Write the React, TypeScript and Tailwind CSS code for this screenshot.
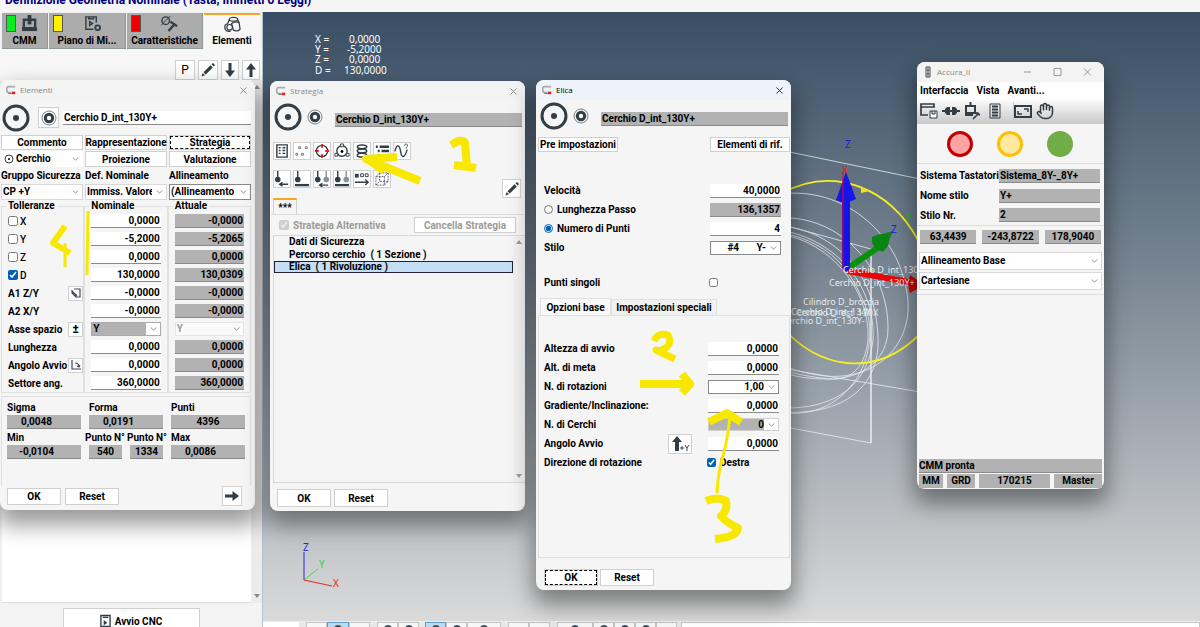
import type { ReactNode } from 'react'
import clsx from 'clsx'
import { Hand, X } from 'lucide-react'

const button = 'flex items-center justify-center border border-[#d0d0d0] bg-white whitespace-nowrap'
const focused = 'border-[#666] outline-1 outline-dashed -outline-offset-2 outline-black'

function Field({ value, label, grey, className }: { value: string; label: string; grey?: boolean; className?: string }) {
  return (
    <input
      aria-label={label}
      defaultValue={value}
      readOnly={grey}
      className={clsx(
        'block h-[14px] min-w-0 border-b border-[#8a8a8a] px-px leading-3 outline-none',
        grey ? 'bg-[#b2b2b2]' : 'bg-white',
        className
      )}
    />
  )
}

function Select({ value, label, className, box }: { value: string; label: string; className?: string; box?: string }) {
  return (
    <div className={clsx('relative', box)}>
      <select
        aria-label={label}
        className={clsx('block h-full w-full appearance-none border pr-[14px] pl-px leading-3', className ?? 'border-[#d9d9d9] bg-white')}
      >
        <option>{value}</option>
      </select>
      <svg viewBox="0 0 8 5" className="pointer-events-none absolute top-1/2 right-1 h-[4px] w-[7px] -translate-y-1/2">
        <path d="M.5.5 4 4 7.5.5" fill="none" stroke="#777" />
      </svg>
    </div>
  )
}

function AppIcon() {
  return (
    <svg viewBox="0 0 12 12" className="h-[10px] w-[10px]">
      <path d="M11 2H3Q1 2 1 4v3q0 2 2 2h3" fill="none" stroke="#aaa" strokeWidth="2" />
      <path d="M3 10h4" stroke="#444" />
      <path d="M7 8h4v3H7z" fill="#e02020" />
    </svg>
  )
}

function TitleBar({ title, active }: { title: string; active?: boolean }) {
  return (
    <div className={clsx('flex h-5 items-center justify-between rounded-t-lg px-[6px]', active ? 'bg-[#edf3f9]' : 'bg-[#f3f3f3]')}>
      <div className={clsx("flex items-center gap-1 font-['Open_Sans',sans-serif] text-[8px] font-normal", active ? 'text-black' : 'text-[#888]')}>
        <AppIcon />
        {title}
      </div>
      <button aria-label="Chiudi">
        <X className={clsx('size-[11px]', active ? 'text-[#222]' : 'text-[#888]')} />
      </button>
    </div>
  )
}

function CircleIcon() {
  return (
    <svg viewBox="0 0 28 28" className="size-7 shrink-0">
      <circle cx="14" cy="14" r="12" fill="none" stroke="#333d45" strokeWidth="3" />
      <circle cx="14" cy="14" r="3" fill="#333d45" />
    </svg>
  )
}

function RingIcon() {
  return (
    <svg viewBox="0 0 16 16" className="size-4 shrink-0">
      <circle cx="8" cy="8" r="7" fill="none" stroke="#77808a" />
      <circle cx="8" cy="8" r="3.7" fill="none" stroke="#333d45" strokeWidth="3" />
    </svg>
  )
}

function PencilIcon() {
  return (
    <svg viewBox="0 0 16 16" className="size-4">
      <path d="m1.500 14.500 1.200-3.500 2.300 2.300zM3.500 10.200 10.500 3.200l2.300 2.300-7 7z" fill="#333d45" />
      <path d="m11.500 2.300 1.500-1.300 2 2-1.300 1.500z" fill="#333d45" />
    </svg>
  )
}

function SolidArrow({ turn }: { turn?: string }) {
  return (
    <svg viewBox="0 0 16 16" className={clsx('size-4 shrink-0', turn)}>
      <path d="M8 1 3 7.500h3.500V15h3V7.500H13z" fill="#333d45" />
    </svg>
  )
}

const modules = [
  { name: 'CMM', light: 'bg-[#00f020]', width: 'w-[46px]' },
  { name: 'Piano di Mi...', light: 'bg-[#fff000]', width: 'w-[77px]' },
  { name: 'Caratteristiche', light: 'bg-[#f00000]', width: 'w-[76px]' },
]

const moduleIcons: Record<string, ReactNode> = {
  CMM: (
    <>
      <path d="M4 5h12v9H4z" fill="none" stroke="#333d45" strokeWidth="2.500" />
      <path d="M10 0v10" stroke="#333d45" strokeWidth="4" />
      <path d="M2 13h16v4H2z" fill="#333d45" />
    </>
  ),
  'Piano di Mi...': (
    <>
      <path d="M14 8V2H3v13h8M6 2v2h5V2M7 7l3 2-3 2z" fill="none" stroke="#333d45" strokeWidth="1.500" />
      <circle cx="15.500" cy="13.500" r="2.500" fill="none" stroke="#333d45" strokeWidth="2" />
    </>
  ),
  Caratteristiche: (
    <>
      <circle cx="6" cy="6" r="4" fill="none" stroke="#333d45" strokeWidth="1.500" />
      <path d="M1 11 11 1" stroke="#333d45" />
      <path d="m9 17 6-7M11 7l7 5" fill="none" stroke="#333d45" strokeWidth="2.500" />
    </>
  ),
  Elementi: (
    <g fill="none" stroke="#333d45" strokeWidth="1.300">
      <ellipse cx="11" cy="3.500" rx="4.500" ry="2" />
      <path d="M6.500 4 5 8M15.500 4l2 4M5 8q-4 1-3 5t6 3M9 8l2 7q4 2 7-1l-1-7q-4-2-8 1z" />
      <circle cx="7" cy="12" r="3" />
    </g>
  ),
}

function ModuleIcon({ name }: { name: string }) {
  return <svg viewBox="0 0 20 18" className="h-[17px] w-[19px]">{moduleIcons[name]}</svg>
}

function Sidebar() {
  return (
    <aside className="flex w-[263px] shrink-0 flex-col border-r border-[#b8c0c8] bg-[#f0f0f0]">
      <nav className="flex gap-px pt-px pl-[2px]">
        {modules.map(m => (
          <button key={m.name} className={clsx('h-9 border-r border-b border-[#8f9a98] bg-[#acacac] px-1', m.width)}>
            <span className="flex h-5 items-center">
              <span className={clsx('h-[17px] w-[10px] border border-[#555]', m.light)} />
              <span className="flex flex-1 justify-center"><ModuleIcon name={m.name} /></span>
            </span>
            <span className="block leading-[14px] whitespace-nowrap">{m.name}</span>
          </button>
        ))}
        <button className="mr-[2px] flex h-9 flex-1 flex-col items-center border-t-2 border-[#f5a623] bg-[#f7f7f7]">
          <span className="flex h-[19px] items-center"><ModuleIcon name="Elementi" /></span>
          <span className="block leading-[14px]">Elementi</span>
        </button>
      </nav>
      <div className="flex h-[31px] items-end justify-end gap-[3px] bg-[#f7f7f7] pr-[2px]">
        <button className={clsx(button, 'size-5 text-[12px] font-normal')}>P</button>
        <button aria-label="Modifica" className={clsx(button, 'size-5')}><PencilIcon /></button>
        <button aria-label="Giù" className={clsx(button, 'h-5 w-[18px]')}><SolidArrow turn="rotate-180" /></button>
        <button aria-label="Su" className={clsx(button, 'h-5 w-[18px]')}><SolidArrow /></button>
      </div>
      <div className="flex flex-1">
        <div className="ml-[2px] flex-1 border-b border-[#dedede] bg-white" />
        <div className="flex w-[11px] flex-col items-center justify-between bg-[#ececec] py-[5px]">
          <span className="border-x-3 border-b-4 border-x-transparent border-b-[#888]" />
          <span className="border-x-3 border-t-4 border-x-transparent border-t-[#888]" />
        </div>
      </div>
      <div className="flex h-6 items-start justify-center bg-[#f3f3f3] pt-[5px]">
        <button className={clsx(button, 'h-[26px] w-[137px] shrink-0 gap-1')}>
          <svg viewBox="0 0 12 14" className="h-[14px] w-[11px]">
            <path d="M1 1h10v12H1zM3 3h6" fill="none" stroke="#333d45" strokeWidth="1.500" />
            <path d="m4 6 4 3-4 3z" fill="#333d45" />
          </svg>
          Avvio CNC
        </button>
      </div>
    </aside>
  )
}

function Window({ className, children }: { className: string; children: ReactNode }) {
  return (
    <section className={clsx('absolute flex flex-col rounded-lg bg-[#f5f5f5] shadow-[0_12px_22px_3px_rgba(0,0,0,0.4)]', className)}>
      {children}
    </section>
  )
}

const tolerances = [
  { label: 'X', check: true, nominal: '0,0000', actual: '-0,0000' },
  { label: 'Y', check: true, nominal: '-5,2000', actual: '-5,2065' },
  { label: 'Z', check: true, nominal: '0,0000', actual: '0,0000' },
  { label: 'D', check: true, on: true, nominal: '130,0000', actual: '130,0309' },
  { label: 'A1 Z/Y', icon: 'plane', nominal: '-0,0000', actual: '-0,0000' },
  { label: 'A2 X/Y', nominal: '-0,0000', actual: '-0,0000' },
  { label: 'Asse spazio', icon: 'sign', axis: true, nominal: 'Y', actual: 'Y' },
  { label: 'Lunghezza', nominal: '0,0000', actual: '0,0000' },
  { label: 'Angolo Avvio', icon: 'angle', nominal: '0,0000', actual: '0,0000' },
  { label: 'Settore ang.', nominal: '360,0000', actual: '360,0000' },
]

function RowIcon({ kind }: { kind: string }) {
  return (
    <button aria-label={kind} className={clsx(button, 'size-[15px] text-[12px]')}>
      {kind === 'sign' && '±'}
      {kind === 'plane' && (
        <svg viewBox="0 0 12 12" className="size-3"><path d="M4 2h6v8H7M2 3v3l4 4V7M2 4l5 5" fill="none" stroke="#445" strokeWidth="1.200" /></svg>
      )}
      {kind === 'angle' && (
        <svg viewBox="0 0 12 12" className="size-3"><path d="M2 1v9h9M5 4q4 0 4 4M7 7l2 1 1-2" fill="none" stroke="#445" strokeWidth="1.200" /></svg>
      )}
    </button>
  )
}

const group = 'min-w-0 border border-[#e0e0e0]'
const legend = 'ml-1 px-[2px] leading-3'
const row = 'flex h-[18px] items-center'

function ElementWindow() {
  return (
    <Window className="top-20 left-0 w-[255px] pb-1">
      <TitleBar title="Elementi" />
      <div className="flex h-[35px] items-center gap-2 pr-1 pl-[2px]">
        <CircleIcon />
        <button aria-label="Tipo" className={clsx(button, 'size-[21px] shrink-0')}><RingIcon /></button>
        <Field label="Nome" value="Cerchio D_int_130Y+" className="-ml-1 flex-1" />
      </div>
      <div className="grid grid-cols-3 gap-x-[2px] pr-1 pl-px">
        <button className={clsx(button, 'h-[15px]')}>Commento</button>
        <button className={clsx(button, 'h-[15px]')}>Rappresentazione</button>
        <button className={clsx(button, focused, 'h-[15px]')}>Strategia</button>
        <div className="mt-px flex h-4 items-center bg-white pl-[3px]">
          <svg viewBox="0 0 10 10" className="size-[10px] shrink-0">
            <circle cx="5" cy="5" r="4" fill="none" stroke="#333d45" />
            <circle cx="5" cy="5" r="1" />
          </svg>
          <Select label="Elemento" value="Cerchio" className="border-transparent" box="h-4 flex-1" />
        </div>
        <button className={clsx(button, 'mt-px h-4')}>Proiezione</button>
        <button className={clsx(button, 'mt-px h-4')}>Valutazione</button>
        <span className="flex h-[17px] items-center whitespace-nowrap">Gruppo Sicurezza</span>
        <span className="flex h-[17px] items-center">Def. Nominale</span>
        <span className="flex h-[17px] items-center">Allineamento</span>
        <Select label="Gruppo Sicurezza" value="CP +Y" box="h-4" />
        <Select label="Def. Nominale" value="Immiss. Valore" box="h-4" />
        <Select label="Allineamento" value="(Allineamento Base)" className="border-[#888] bg-white" box="h-4" />
      </div>

      <div className="grid grid-cols-3 pr-1 pl-px">
        <fieldset className={group}>
          <legend className={legend}>Tolleranze</legend>
          {tolerances.map(t => (
            <div key={t.label} className={clsx(row, 'justify-between pl-[6px]')}>
              {t.check ? (
                <label className="flex items-center gap-[2px] font-medium">
                  <input type="checkbox" defaultChecked={t.on} className="size-[10px] accent-[#005fb8]" />
                  {t.label}
                </label>
              ) : (
                <span className="whitespace-nowrap">{t.label}</span>
              )}
              {t.icon && <RowIcon kind={t.icon} />}
            </div>
          ))}
        </fieldset>
        <fieldset className={group}>
          <legend className={legend}>Nominale</legend>
          {tolerances.map(t => (
            <div key={t.label} className={clsx(row, 'px-[6px]')}>
              {t.axis ? (
                <Select label={t.label} value={t.nominal} className="border-[#aaa] bg-linear-to-r from-[#b2b2b2] from-80% to-white to-80%" box="h-[14px] w-full" />
              ) : (
                <Field label={t.label} value={t.nominal} className="w-full text-right" />
              )}
            </div>
          ))}
        </fieldset>
        <fieldset className={group}>
          <legend className={legend}>Attuale</legend>
          {tolerances.map(t => (
            <div key={t.label} className={clsx(row, 'px-[6px]')}>
              {t.axis ? (
                <Select label={t.label} value={t.actual} className="border-[#e5e5e5] bg-[#fafafa] text-[#999]" box="h-[14px] w-full" />
              ) : (
                <Field label={t.label} value={t.actual} grey className="w-full text-right" />
              )}
            </div>
          ))}
        </fieldset>
      </div>

      <div className="mt-[3px] mr-1 ml-px h-[90px] border border-b-0 border-[#e0e0e0] px-[5px] pt-1">
        <div className="grid grid-cols-3 gap-x-2">
          <span className="leading-[14px]">Sigma</span>
          <span className="leading-[14px]">Forma</span>
          <span className="leading-[14px]">Punti</span>
          <Field label="Sigma" value="0,0048" grey className="w-full pr-4 text-center" />
          <Field label="Forma" value="0,0191" grey className="w-full pr-4 text-center" />
          <Field label="Punti" value="4396" grey className="w-full text-center" />
        </div>
        <div className="mt-[2px] grid grid-cols-3 gap-x-2">
          <span className="leading-[14px]">Min</span>
          <span className="-ml-1 flex justify-between leading-[14px] whitespace-nowrap"><span>Punto N°</span><span className="-mr-1">Punto N°</span></span>
          <span className="leading-[14px]">Max</span>
          <Field label="Min" value="-0,0104" grey className="w-full pr-4 text-center" />
          <div className="flex gap-2">
            <Field label="Punto min" value="540" grey className="w-full text-center" />
            <Field label="Punto max" value="1334" grey className="w-full text-center" />
          </div>
          <Field label="Max" value="0,0086" grey className="w-full pr-4 text-center" />
        </div>
      </div>
      <div className="flex items-center gap-1 pr-[13px] pl-[7px]">
        <button className={clsx(button, 'h-[17px] w-[54px]')}>OK</button>
        <button className={clsx(button, 'h-[17px] w-[54px]')}>Reset</button>
        <button aria-label="Avanti" className={clsx(button, 'ml-auto size-5')}><SolidArrow turn="rotate-90" /></button>
      </div>
    </Window>
  )
}

const strategyIcons: ReactNode[] = [
  <><path d="M3 2h11v13H3z" fill="none" stroke="#333d45" strokeWidth="1.500" /><path d="M5 5h2m2 0h3M5 8h2m2 0h3M5 11h2m2 0h3" stroke="#333d45" strokeWidth="1.500" /></>,
  <path d="M2 11h2v2H2zM8 11h2v2H8zM5 4h2v2H5zM12 4h2v2h-2z" fill="none" stroke="#777" />,
  <><circle cx="8.500" cy="8.500" r="6" fill="none" stroke="#333d45" strokeWidth="1.500" /><path d="M8.500 1v4m0 7v4M1 8.500h4m7 0h4" stroke="#f01818" strokeWidth="2" /></>,
  <><circle cx="8.500" cy="8.500" r="5.500" fill="none" stroke="#333d45" strokeWidth="1.500" /><circle cx="8.500" cy="9" r="1.500" /><path d="M7 1h3v3H7zM1 11h3v3H1zM13 11h3v3h-3z" fill="#fff" stroke="#333d45" /></>,
  <g fill="none" stroke="#333d45" strokeWidth="1.600"><ellipse cx="8.500" cy="4" rx="5" ry="2" /><ellipse cx="8.500" cy="8.500" rx="5" ry="2" /><ellipse cx="8.500" cy="13" rx="5" ry="2" /></g>,
  <path d="M2 4h2m2 0h10M4 8.500h2m2 0h8M4 13h2m2 0h8" stroke="#333d45" strokeWidth="2.500" />,
  <><path d="M1 9c2-9 5-7 6 0s4 8 7-2" fill="none" stroke="#333d45" strokeWidth="1.500" /><path d="M11 3q0-2 2-2t1 3l-1 1v1" fill="none" stroke="#556" /></>,
]

const probe = <><path d="M4 0v10" stroke="#333d45" strokeWidth="1.500" /><circle cx="4" cy="9" r="3" fill="#333d45" /></>
const probeFaded = <><path d="M13 0v10" stroke="#88929a" strokeWidth="1.500" /><circle cx="13" cy="9" r="3" fill="#88929a" /></>

const travelIcons: ReactNode[] = [
  <>{probe}<path d="M15 14H6m3-2-3 2 3 2" fill="none" stroke="#333d45" strokeWidth="1.500" /></>,
  <>{probe}<path d="M1 15h15" stroke="#333d45" strokeWidth="2.500" /></>,
  <>{probe}{probeFaded}<path d="M15 15H6m3-2-3 2 3 2" fill="none" stroke="#333d45" strokeWidth="1.500" /></>,
  <>{probe}{probeFaded}<path d="M1 15h15" stroke="#333d45" strokeWidth="2.500" /></>,
  <><path d="M1 3h4v4H1z" fill="#333d45" /><path d="M7 3h3v3H7zM12 3h3v3h-3z" fill="none" stroke="#333d45" /><path d="M1 12h14m-3-3 3 3-3 3" fill="none" stroke="#333d45" strokeWidth="1.500" /></>,
  <path d="M2 6h9v9H2zM6 2h9v9h-4M2 6l4-4v9M11 6l4-4M2 15l4-4h5M11 15l4-4" fill="none" stroke="#556" strokeDasharray="2 1" />,
]

function IconRow({ icons }: { icons: ReactNode[] }) {
  return (
    <div className="flex gap-[2px]">
      {icons.map((icon, i) => (
        <button key={i} aria-label={`Strumento ${i + 1}`} className={clsx(button, 'size-[18px]')}>
          <svg viewBox="0 0 17 17" className="size-4 shrink-0">{icon}</svg>
        </button>
      ))}
    </div>
  )
}

function NameRow() {
  return (
    <div className="flex h-8 items-center pr-[3px] pl-1">
      <CircleIcon />
      <span className="ml-[5px]"><RingIcon /></span>
      <Field label="Nome elemento" value="Cerchio D_int_130Y+" grey className="mt-[6px] ml-3 flex-1" />
    </div>
  )
}

function StrategyWindow() {
  return (
    <Window className="top-[81px] left-[270px] w-[255px] pb-1">
      <TitleBar title="Strategia" />
      <NameRow />
      <div className="flex flex-col gap-[10px] pt-[9px] pl-[3px]">
        <IconRow icons={strategyIcons} />
        <IconRow icons={travelIcons} />
      </div>
      <div className="-mt-[9px] flex items-end justify-between pr-1 pl-[3px]">
        <button className="h-4 w-6 border border-t-2 border-b-0 border-[#d0d0d0] border-t-[#f5a623]">***</button>
        <button aria-label="Modifica" className={clsx(button, 'mb-4 size-[19px]')}><PencilIcon /></button>
      </div>
      <div className="mx-px flex h-[21px] items-center justify-between border-t border-[#ddd] px-2 text-[#9a9a9a]">
        <label className="flex items-center gap-1">
          <input type="checkbox" defaultChecked disabled className="size-[10px]" />
          Strategia Alternativa
        </label>
        <button className={clsx(button, 'h-4 w-[102px]')}>Cancella Strategia</button>
      </div>
      <div className="ml-[3px] flex h-[248px] border border-r-0 border-[#d8d8d8]">
        <ul className="flex-1">
          <li className="pl-[15px] leading-3">Dati di Sicurezza</li>
          <li className="pl-[15px] leading-[13px] whitespace-pre">Percorso cerchio  ( 1 Sezione )</li>
          <li className="border border-[#223] bg-[#c3def5] pl-[14px] leading-[10px] whitespace-pre">Elica  ( 1 Rivoluzione )</li>
        </ul>
        <div className="flex w-3 flex-col items-center justify-between bg-[#f0f0f0] py-1">
          <span className="border-x-3 border-b-4 border-x-transparent border-b-[#999]" />
          <span className="border-x-3 border-t-4 border-x-transparent border-t-[#999]" />
        </div>
      </div>
      <div className="mt-[6px] flex gap-[3px] pl-[7px]">
        <button className={clsx(button, 'h-[18px] w-[54px]')}>OK</button>
        <button className={clsx(button, 'h-[18px] w-[54px]')}>Reset</button>
      </div>
    </Window>
  )
}

function FormRow({ label, children }: { label: ReactNode; children: ReactNode }) {
  return (
    <div className="flex h-[19px] items-center justify-between">
      {label}
      {children}
    </div>
  )
}

function HelixWindow() {
  return (
    <Window className="top-20 left-[536px] w-[255px] pb-1">
      <TitleBar title="Elica" active />
      <NameRow />
      <div className="mt-[5px] flex justify-between pr-px pl-[2px]">
        <button className={clsx(button, 'h-[15px] w-20')}>Pre impostazioni</button>
        <button className={clsx(button, 'h-[15px] w-20')}>Elementi di rif.</button>
      </div>
      <div className="mt-[29px] pr-[10px] pl-2">
        <FormRow label="Velocità"><Field label="Velocità" value="40,0000" className="w-[71px] text-right" /></FormRow>
        <FormRow label={<label className="flex items-center gap-1"><input type="radio" name="passo" className="size-[9px]" />Lunghezza Passo</label>}>
          <Field label="Lunghezza" value="136,1357" grey className="w-[71px] text-right" />
        </FormRow>
        <FormRow label={<label className="flex items-center gap-1"><input type="radio" name="passo" defaultChecked className="size-[9px] accent-[#005fb8]" />Numero di Punti</label>}>
          <Field label="Punti" value="4" className="w-[71px] text-right" />
        </FormRow>
        <FormRow label="Stilo">
          <Select label="Stilo" value={'#4\u00a0\u00a0\u00a0\u00a0\u00a0\u00a0\u00a0Y-'} className="border-[#888] bg-white text-right [text-align-last:right]" box="h-[14px] w-[71px]" />
        </FormRow>
      </div>
      <label className="mt-4 flex h-[19px] items-center justify-between pr-[73px] pl-2">
        Punti singoli
        <input type="checkbox" className="size-[9px]" />
      </label>
      <div className="mt-[6px] flex items-end pl-1" role="tablist">
        <button role="tab" aria-selected className="h-[17px] w-[71px] border border-b-0 border-[#e0e0e0] bg-[#f9f9f9]">Opzioni base</button>
        <button role="tab" aria-selected={false} className="h-4 w-[106px] border border-b-0 border-[#e0e0e0] bg-[#f1f1f1]">Impostazioni speciali</button>
      </div>
      <div className="mr-px ml-[2px] h-[243px] border border-[#e0e0e0] pt-[23px] pr-[10px] pl-[5px]">
        <FormRow label="Altezza di avvio"><Field label="Altezza" value="0,0000" className="w-[71px] text-right" /></FormRow>
        <FormRow label="Alt. di meta"><Field label="Meta" value="0,0000" className="w-[71px] text-right" /></FormRow>
        <FormRow label="N. di rotazioni">
          <Select label="N. di rotazioni" value="1,00" className="border-[#888] bg-white text-right [text-align-last:right]" box="h-[14px] w-[71px]" />
        </FormRow>
        <FormRow label="Gradiente/Inclinazione:"><Field label="Gradiente" value="0,0000" className="w-[71px] text-right" /></FormRow>
        <FormRow label="N. di Cerchi">
          <Select label="N. di Cerchi" value="0" className="border-[#d0d0d0] bg-linear-to-r from-[#b2b2b2] from-80% to-white to-80% text-right [text-align-last:right]" box="h-[13px] w-[71px]" />
        </FormRow>
        <FormRow label="Angolo Avvio">
          <button aria-label="+Y" className={clsx(button, 'mr-4 ml-auto h-5 w-6')}>
            <svg viewBox="0 0 22 18" className="h-[18px] w-[22px]">
              <path d="M8 1 3 7h3v9h4V7h3z" fill="#333d45" />
              <path d="M11 13h4m-2-2v4m3-5 2 3 2-3m-2 3v3" fill="none" stroke="#445" />
            </svg>
          </button>
          <Field label="Angolo" value="0,0000" className="w-[71px] text-right" />
        </FormRow>
        <FormRow label="Direzione di rotazione">
          <label className="flex w-[72px] items-center gap-1"><input type="checkbox" defaultChecked className="size-[9px] accent-[#005fb8]" />Destra</label>
        </FormRow>
      </div>
      <div className="mt-[11px] flex gap-[2px] pl-2">
        <button className={clsx(button, focused, 'h-[17px] w-[54px]')}>OK</button>
        <button className={clsx(button, 'h-[17px] w-[54px]')}>Reset</button>
      </div>
    </Window>
  )
}

const machineTools: ReactNode[] = [
  <><path d="M1 2h13v3H1zM1 3v10h7" fill="none" stroke="#333d45" strokeWidth="1.700" /><path d="M10 9h7v7h-7zM12 9v3h3V9" fill="#fff" stroke="#333d45" /></>,
  <><path d="M0 9h18" stroke="#333d45" strokeWidth="2" /><path d="M3 7l2-2h3v8H5l-2-2zM10 5h3l2 2v4l-2 2h-3z" fill="#333d45" /></>,
  <><path d="M2 4h9v7H2zM6.500 0v5" fill="none" stroke="#333d45" strokeWidth="2" /><path d="M1 13h8" stroke="#333d45" strokeWidth="2" /><path d="m9 17 6-6m-2-1v2l3 1" fill="none" stroke="#333d45" strokeWidth="1.700" /></>,
  <><path d="M4 2h10v14H4z" fill="none" stroke="#333d45" /><path d="M6 4.500h6M6 7.500h6M6 10.500h6M6 13.500h6" stroke="#333d45" strokeWidth="2" /></>,
  <><path d="M1 4h16v11H1z" fill="none" stroke="#333d45" strokeWidth="2" /><path d="M10 7h4v3M8 12H4V9" fill="none" stroke="#333d45" strokeWidth="1.500" /></>,
]

function MachineWindow() {
  return (
    <Window className="top-[62px] left-[917px] w-[187px] pb-px">
      <div className="flex h-5 items-center justify-between rounded-t-lg bg-[#f3f3f3] pr-3 pl-2 font-['Open_Sans',sans-serif] text-[8px] font-normal text-[#888]">
        <span className="flex items-center gap-[6px]">
          <svg viewBox="0 0 6 12" className="h-3 w-[6px]"><path d="M1 1h4v10H1zM1 4h4M1 8h4M3 1v10" fill="none" stroke="#555" /></svg>
          Accura_II
        </span>
        <svg viewBox="0 0 68 8" className="h-2 w-[68px]">
          <path d="M0 4h7M30 .5h7v7h-7zM60 .5l7 7m0-7-7 7" fill="none" stroke="#999" />
        </svg>
      </div>
      <div className="flex h-4 items-center gap-2 bg-white pl-[3px]">
        <button>Interfaccia</button>
        <button>Vista</button>
        <button>Avanti...</button>
      </div>
      <div className="flex h-[26px] items-center gap-1 border-b border-[#ccc] bg-linear-to-b from-white to-[#cacaca] px-[3px]">
        {machineTools.map((icon, i) => (
          <button key={i} aria-label={`Comando ${i + 1}`} className={clsx(i === 4 && 'ml-[5px] border-l border-[#ccc]')}>
            <svg viewBox="0 0 18 18" className="size-[18px]">{icon}</svg>
          </button>
        ))}
        <button aria-label="Sposta"><Hand className="size-[18px] text-[#333d45]" /></button>
      </div>
      <div className="flex h-[40px] items-center justify-center gap-6 border-b border-[#ddd] pr-[2px]">
        <span className="size-[26px] rounded-full border-3 border-[#c00000] bg-[#ffa3a3]" />
        <span className="size-[26px] rounded-full border-3 border-[#ffc000] bg-[#ffe8a0]" />
        <span className="size-[26px] rounded-full bg-[#70ad47]" />
      </div>
      <div className="flex h-[62px] flex-col border-b border-[#ddd] pt-[2px] pr-1 pl-[3px]">
        {[['Sistema Tastatori', 'Sistema_8Y-_8Y+'], ['Nome stilo', 'Y+'], ['Stilo Nr.', '2']].map(([name, value]) => (
          <div key={name} className="flex h-5 items-center">
            <span className="w-[79px] whitespace-nowrap">{name}</span>
            <Field label={name} value={value} grey className="flex-1" />
          </div>
        ))}
      </div>
      <div className="grid grid-cols-3 gap-[6px] px-[3px] pt-1">
        <Field label="X" value="63,4439" grey className="w-full text-center" />
        <Field label="Y" value="-243,8722" grey className="w-full text-center" />
        <Field label="Z" value="178,9040" grey className="w-full text-center" />
      </div>
      <div className="mt-2 flex flex-col gap-[2px] border-b border-[#ddd] px-[2px] pb-1">
        <Select label="Sistema di coordinate" value="Allineamento Base" box="h-[18px]" />
        <Select label="Coordinate" value="Cartesiane" box="h-[18px]" />
      </div>
      <div className="h-[164px]" />
      <p className="mx-[2px] border-b border-[#8a8a8a] bg-[#b2b2b2] leading-[13px]">CMM pronta</p>
      <div className="mt-px flex h-[14px] gap-1 px-[2px] text-center leading-[13px]">
        <span className="w-6 bg-[#b2b2b2]">MM</span>
        <span className="w-7 bg-[#b2b2b2]">GRD</span>
        <span className="flex-1 bg-[#b2b2b2]">170215</span>
        <span className="w-12 bg-[#b2b2b2]">Master</span>
      </div>
    </Window>
  )
}

function Scene() {
  return (
    <svg viewBox="263 12 937 610" className="absolute top-0 left-0 h-[610px] w-[937px] font-['Noto_Sans',sans-serif] text-[10px] font-normal">
      <g fill="none" stroke="#e8ecef" strokeWidth="0.800">
        <path d="m780 150 140 29M780 224l91 25M871 443l-91-17M780 368l140 24" />
        <path d="M871 249v194" stroke="#fff" strokeWidth="1.200" />
        <path d="M780 194c65-8 115 40 125 90 14 50-20 97-80 92-15-2-30-5-45-12" />
        <path d="M780 218c60-3 108 50 108 110 0 32-25 51-60 51-18 0-35-2-48-8" />
        <path d="M780 226c55 4 100 50 98 120-2 40-33 70-98 66" />
        <path d="M780 230c60 10 96 60 93 110-5 45-38 70-93 68" />
        <path d="M780 234c50 8 90 55 88 105-2 25-15 42-38 40-20-2-40-6-50-10" />
        <path d="M780 232c45 10 65 30 80 62 30 55-12 130-80 118" />
      </g>
      <path d="M780 194c55-30 110-5 138 46M780 325c40 46 95 52 138 11" fill="none" stroke="#f8f020" strokeWidth="1.800" />
      <path d="m861 187 9 4-9 2z" fill="#f0e020" />
      <path d="m848 268 31-21" stroke="#06920b" strokeWidth="6" />
      <path d="m893 231-21 6q-1 6 3 11 4 4 9 3z" fill="#0a8512" />
      <circle cx="881" cy="242" r="8" fill="#0a8512" />
      <path d="m848 271 66 12" stroke="#e80606" strokeWidth="6" />
      <path d="m910 275 14 10-14 8q-3-9 0-18z" fill="#c80000" />
      <path d="M842 200h8v69l-4 3-4-4z" fill="#1414e8" />
      <path d="m846 172 10 27q-10 6-20 1z" fill="#1616ea" />
      <path d="M843 172v98" stroke="#f00000" />
      <g fill="#e8ebee" className="text-[9px]">
        <text x="843" y="273">Cerchio D_int_130Y+</text>
        <text x="829" y="286">Cerchio D_int_130Y+</text>
        <text x="803" y="305">Cilindro D_broccia</text>
        <text x="791" y="315">Cerchio D_int_134Y</text>
        <text x="796" y="316">Cerchio D_est_130X</text>
        <text x="787" y="324">erchio D_int_130Y-</text>
      </g>
      <text x="845" y="148" fill="#1818e8">Z</text>
      <text x="842" y="174" fill="#e01818">X</text>
      <text x="891" y="233" fill="#1818e8">Z</text>
      <text x="906" y="221" fill="#10c818">Y</text>
      <path d="M304 580v-28" stroke="#2828e0" />
      <path d="m304 580 14-11" stroke="#38e038" />
      <path d="m304 580 28 6" stroke="#f02020" />
      <text x="303" y="551" fill="#2828e0">Z</text>
      <text x="319" y="568" fill="#38d038">Y</text>
      <text x="333" y="587" fill="#f02020">X</text>
      <g fill="#fff">
        <text x="315" y="43">X =</text><text x="349" y="43">0,0000</text>
        <text x="315" y="53">Y =</text><text x="347" y="53">-5,2000</text>
        <text x="315" y="63">Z =</text><text x="349" y="63">0,0000</text>
        <text x="315" y="74">D =</text><text x="344" y="74">130,0000</text>
      </g>
    </svg>
  )
}

// freehand marker notes over the dialogs
function MarkerNotes() {
  return (
    <svg viewBox="0 0 1200 627" className="pointer-events-none absolute top-0 left-0 h-[627px] w-[1200px]">
      <g fill="none" stroke="#f8e800" strokeWidth="8" strokeLinejoin="round">
        <path d="m451 145 7-4q6-1 7 2l2 23M454 165l22 3" />
        <path d="m397 157-31 2 54 22M366 158l18 13" />
        <path d="m65 226-12 17 17 10" strokeWidth="6" />
        <path d="M65 243v24" strokeWidth="3" />
        <path d="m88 211-1 64" strokeWidth="3" />
        <path d="M654 341q4-9 14-6 4 7-1 12-6 5-11 3l8 4 11 5" strokeWidth="7" />
        <path d="M640 384h48M682 374l8 10-8 9" />
        <path d="m709 422 18-9 14 9" />
        <path d="M730 412q-1 22-7 44-5 16-6 37" strokeWidth="3" />
        <path d="M706 501q12-5 20 0 2 9-5 15 6 7 17 12-1 9-23 11" />
      </g>
    </svg>
  )
}

const bottomTools = [
  { width: 'w-[21px]', gap: 'ml-[7px]' },
  { width: 'w-[22px]', on: true, icon: true },
  { width: 'w-[21px]' },
  { width: 'w-[21px]', gap: 'ml-[7px]', icon: true },
  { width: 'w-[21px]', icon: true },
  { width: 'w-[21px]', gap: 'ml-[6px]', on: true, icon: true },
  { width: 'w-[21px]', icon: true },
  { width: 'w-[34px]', icon: true },
  { width: 'w-[21px]', gap: 'ml-[7px]' },
  { width: 'w-[21px]' },
  { width: 'w-[36px]', gap: 'ml-[7px]', icon: true },
  { width: 'w-[21px]', icon: true },
  { width: 'w-[21px]', icon: true },
  { width: 'w-[21px]', icon: true },
  { width: 'w-[21px]' },
]

export default function App() {
  return (
    <main className="relative flex h-screen flex-col overflow-hidden bg-[#f5f5f5] font-[Roboto,sans-serif] text-[10px] font-bold text-black">
      <header className="flex h-3 shrink-0 items-end overflow-hidden pb-1 pl-[5px]">
        <h1 className="text-[12px] leading-4 text-[#000080]">Definizione Geometria Nominale (Tasta, Immetti o Leggi)</h1>
      </header>
      <div className="flex min-h-0 flex-1">
        <Sidebar />
        <div className="flex min-w-0 flex-1 flex-col">
          <div className="relative flex-1 overflow-hidden bg-linear-to-b from-[#394e64] via-[#7c8995] via-45% to-[#dadada]">
            <Scene />
          </div>
          <div className="flex h-[6px] shrink-0 overflow-hidden border-t border-[#eee] bg-[#e8e8e8]">
            <div className="w-9 bg-white" />
            {bottomTools.map((tool, i) => (
              <button
                key={i}
                aria-label={`Vista ${i + 1}`}
                className={clsx('flex h-5 justify-center border pt-[2px]', tool.width, tool.gap, tool.on ? 'border-[#5f9ccc] bg-[#b9dcf5]' : 'border-[#c4c4c4] bg-[#f7f7f7]')}
              >
                {tool.icon && <span className="size-2 rounded-full bg-[#444d55]" />}
              </button>
            ))}
            <div className="ml-1 h-5 flex-1 border border-[#c4c4c4] bg-white" />
          </div>
        </div>
      </div>
      <ElementWindow />
      <StrategyWindow />
      <HelixWindow />
      <MachineWindow />
      <MarkerNotes />
    </main>
  )
}
